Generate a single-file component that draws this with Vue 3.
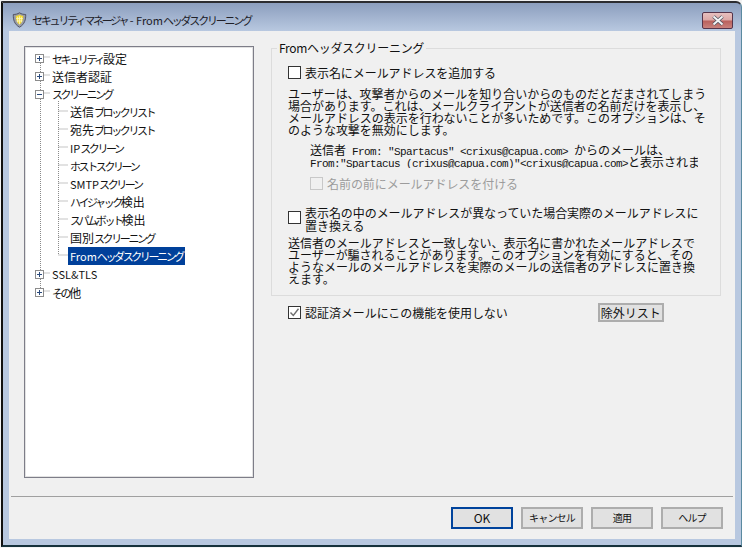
<script setup>
const kindOf = (t) => (/^[A-Za-z&]+$/.test(t) ? 'latin' : /^[\u4e00-\u9fff]+$/.test(t) ? 'kanji' : 'kana')
const split = (s) => s.split(/([A-Za-z&]+|[\u4e00-\u9fff]+)/).filter(Boolean).map((text) => ({ text, kind: kindOf(text) }))
const roots = [
  { label: 'セキュリティ設定', mark: '+' },
  { label: '送信者認証', mark: '+' },
  { label: 'スクリーニング', mark: '-' },
].map((r) => ({ ...r, parts: split(r.label) }))
const children = ['送信ブロックリスト', '宛先ブロックリスト', 'IPスクリーン', 'ホストスクリーン', 'SMTPスクリーン', 'ハイジャック検出', 'スパムボット検出', '国別スクリーニング'].map((label) => ({ label, parts: split(label) }))
const selected = split('Fromヘッダスクリーニング')
const tail = ['SSL&TLS', 'その他'].map((label) => ({ label, parts: split(label) }))
const buttons = ['キャンセル', '適用', 'ヘルプ']
</script>

<template>
  <div class="window">
    <div class="titlebar">
      <svg class="shield" width="15" height="16" viewBox="0 0 16 17">
        <path d="M8 .8 C6 2.2 3.6 2.6 1.4 2.6 C1.2 8 2.4 13 8 16.2 C13.6 13 14.8 8 14.6 2.6 C12.4 2.6 10 2.2 8 .8Z" fill="#9a9ca6" stroke="#4c4f60" />
        <path d="M8 3 C6.8 3.8 5.4 4.2 4 4.2 C4 8 5 11.4 8 13.6 C11 11.4 12 8 12 4.2 C10.6 4.2 9.2 3.8 8 3Z" fill="#f2d92e" />
        <path d="M6 5 V11 M8 4.5 V13 M10 5 V11 M4.5 7 H11.5 M5 9.5 H11" stroke="#fff8c0" stroke-width=".9" />
      </svg>
      <span class="title">セキュリティマネージャ<span class="latin"> - From</span>ヘッダスクリーニング</span>
      <div class="close">
        <svg width="14" height="11" viewBox="0 0 14 11">
          <path d="M2.5 1.5 L11.5 9.5 M11.5 1.5 L2.5 9.5" stroke="#4f5560" stroke-width="3.6" />
          <path d="M2.5 1.5 L11.5 9.5 M11.5 1.5 L2.5 9.5" stroke="#f4f4f6" stroke-width="2" />
        </svg>
      </div>
    </div>

    <div class="frame">
      <div class="client">
        <div class="main">
          <div class="tree">
            <svg class="lines" width="60" height="260" viewBox="0 0 60 260">
              <path d="M15.5 10 V243 M15.5 8 H25 M15.5 26 H25 M15.5 44 H25 M15.5 224 H25 M15.5 242 H25 M33.5 52 V206 M33.5 62 H43 M33.5 80 H43 M33.5 98 H43 M33.5 116 H43 M33.5 134 H43 M33.5 152 H43 M33.5 170 H43 M33.5 188 H43 M33.5 206 H43" stroke="#8a8a8a" stroke-dasharray="1 1" fill="none" />
            </svg>
            <div v-for="r in roots" :key="r.label" class="row root">
              <span class="exp">
                <svg width="9" height="9" viewBox="0 0 9 9">
                  <path :d="r.mark === '+' ? 'M2 4.5 H7 M4.5 2 V7' : 'M2 4.5 H7'" stroke="#2a4a7c" fill="none" />
                </svg>
              </span>
              <span><span v-for="p in r.parts" :key="p.text" :class="p.kind">{{ p.text }}</span></span>
            </div>
            <div v-for="c in children" :key="c.label" class="row child">
              <span class="item"><span v-for="p in c.parts" :key="p.text" :class="p.kind">{{ p.text }}</span></span>
            </div>
            <div class="row child">
              <span class="item selected"><span v-for="p in selected" :key="p.text" :class="p.kind">{{ p.text }}</span></span>
            </div>
            <div v-for="t in tail" :key="t.label" class="row root">
              <span class="exp">
                <svg width="9" height="9" viewBox="0 0 9 9"><path d="M2 4.5 H7 M4.5 2 V7" stroke="#2a4a7c" fill="none" /></svg>
              </span>
              <span><span v-for="p in t.parts" :key="p.text" :class="p.kind">{{ p.text }}</span></span>
            </div>
          </div>

          <div class="pane">
            <div class="group">
              <span class="legend">Fromヘッダスクリーニング</span>
              <label class="check first"><span class="box"></span><span>表示名にメールアドレスを追加する</span></label>
              <p class="para p1">ユーザーは、攻撃者からのメールを知り合いからのものだとだまされてしまう<br>場合があります。これは、メールクライアントが送信者の名前だけを表示し、<br>メールアドレスの表示を行わないことが多いためです。このオプションは、そ<br>のような攻撃を無効にします。</p>
              <div class="sample">
                <div class="mono"><span class="cj">送信者</span> From: "Spartacus" &lt;crixus@capua.com&gt; <span class="cj">からのメールは、</span></div>
                <div class="mono">From:"Spartacus (crixus@capua.com)"&lt;crixus@capua.com&gt;<span class="cj">と表示されます</span></div>
              </div>
              <label class="check disabled"><span class="box"></span><span>名前の前にメールアドレスを付ける</span></label>
              <label class="check second"><span class="box"></span><span class="wrap">表示名の中のメールアドレスが異なっていた場合実際のメールアドレスに<br>置き換える</span></label>
              <p class="para p2">送信者のメールアドレスと一致しない、表示名に書かれたメールアドレスで<br>ユーザーが騙されることがあります。このオプションを有効にすると、その<br>ようなメールのメールアドレスを実際のメールの送信者のアドレスに置き換<br>えます。</p>
            </div>
            <div class="foot">
              <label class="check"><span class="box on">
                <svg width="11" height="11" viewBox="0 0 11 11"><path d="M1.5 5.5 L4.3 8.5 L9.5 1.8" stroke="#6f6f6f" stroke-width="1.4" fill="none" /></svg>
              </span><span>認証済メールにこの機能を使用しない</span></label>
              <button class="btn exclude">除外リスト</button>
            </div>
          </div>
        </div>

        <div class="sep"></div>
        <div class="actions">
          <button class="btn action ok">OK</button>
          <button v-for="b in buttons" :key="b" class="btn action small">{{ b }}</button>
        </div>
      </div>
    </div>
  </div>
</template>

<style>
html, body { margin: 0; background: #fff; overflow: hidden; }
</style>

<style scoped>
.window {
  width: 742px;
  height: 548px;
  box-sizing: border-box;
  border-top: 1px solid #f0f0f0;
  padding: 0 0 0 1px;
  display: flex;
  flex-direction: column;
  font-family: "Noto Sans CJK JP", "Liberation Sans", sans-serif;
  font-size: 12px;
  color: #111;
  background: #f4f4f4;
}
.titlebar {
  height: 30px;
  box-sizing: border-box;
  flex: none;
  border-top: 2px solid #2c2c30;
  border-left: 2px solid #111;
  border-right: 1px solid #5b8aa0;
  border-top-right-radius: 6px;
  padding: 6px 8px 0 9px;
  display: flex;
  align-items: center;
  gap: 5px;
  background: linear-gradient(#8c9ebe, #b8c8e0);
}
.shield { flex: none; }
.title {
  flex: 1;
  font-size: 11px;
  letter-spacing: -2.2px;
  white-space: nowrap;
  color: #202028;
}
.title .latin { letter-spacing: 0; }
.close {
  width: 31px;
  height: 17px;
  box-sizing: border-box;
  border: 1px solid #55344a;
  border-radius: 2px;
  background: linear-gradient(#e6bfbf 0, #dca8a6 48%, #b9605c 52%, #c9817c 100%);
  display: flex;
  align-items: center;
  justify-content: center;
}
.frame {
  flex: 1;
  display: flex;
  border-left: 2px solid #111;
  border-right: 1px solid #5b8aa0;
  border-bottom: 2px solid #16323c;
  margin-bottom: 1px;
  background: #b8c8e0;
  padding: 0 6px 6px;
}
.client {
  flex: 1;
  display: flex;
  flex-direction: column;
  background: #f0f0f0;
}
.main {
  height: 465px;
  flex: none;
  display: flex;
  box-sizing: border-box;
  padding: 15px 0 0 15px;
}
.tree {
  width: 230px;
  height: 432px;
  flex: none;
  box-sizing: border-box;
  border: 1px solid #7d7d88;
  background: #fff;
  box-shadow: inset 0 0 0 1px #e2e2e2;
  padding: 2px 0 0 10px;
  position: relative;
  font-size: 11px;
}
.tree .kana { letter-spacing: -2.4px; }
.tree .kanji { font-size: 12px; }
.tree .latin { letter-spacing: 0; }
.lines { position: absolute; left: 0; top: 2px; pointer-events: none; }
.row { height: 18px; display: flex; align-items: center; white-space: nowrap; position: relative; }
.root { gap: 8px; }
.exp {
  width: 9px;
  height: 9px;
  box-sizing: border-box;
  border: 1px solid #8c8c8c;
  background: #fff;
  display: flex;
  align-items: center;
  justify-content: center;
  flex: none;
  position: relative;
}
.exp svg { margin: -1px; flex: none; }
.child { padding-left: 33px; }
.item { padding: 0 2px; line-height: 18px; height: 18px; }
.selected { background: #00409a; color: #fff; }
.pane {
  margin-left: 17px;
  width: 450px;
  flex: none;
  margin-top: 2px;
}
.group {
  height: 248px;
  box-sizing: border-box;
  border: 1px solid #dcdcdc;
  position: relative;
  padding: 17px 0 0 16px;
}
.legend {
  position: absolute;
  left: 5px;
  top: -8px;
  background: #f0f0f0;
  padding: 0 2px;
  line-height: 14px;
  letter-spacing: -.3px;
  white-space: nowrap;
}
.check { display: flex; align-items: center; gap: 4px; white-space: nowrap; line-height: 13px; letter-spacing: -.06px; }
.box {
  width: 13px;
  height: 13px;
  box-sizing: border-box;
  border: 1px solid #333;
  background: #fff;
  flex: none;
  display: flex;
  align-items: center;
  justify-content: center;
}
.para { margin: 0; line-height: 12px; white-space: nowrap; letter-spacing: -.03px; }
.p1 { margin-top: 9px; }
.sample { margin: 8px 0 0 22px; width: 388px; overflow: hidden; }
.mono { font-family: "Liberation Mono", monospace; font-size: 11px; letter-spacing: -.6px; line-height: 12px; height: 12px; white-space: nowrap; }
.cj { font-family: "Noto Sans CJK JP", sans-serif; font-size: 12px; letter-spacing: 0; }
.disabled { margin: 9px 0 0 22px; color: #9c9c9c; }
.disabled .box { border-color: #c8c8c8; background: #f0f0f0; }
.second { margin-top: 21px; align-items: flex-start; }
.wrap { margin-top: -5px; line-height: 13px; }
.p2 { margin-top: 5px; }
.foot {
  display: flex;
  align-items: center;
  padding-left: 17px;
  height: 19px;
  margin-top: 7px;
}
.btn {
  box-sizing: border-box;
  border: 2px solid #adadad;
  background: #e1e1e1;
  font-family: inherit;
  color: #111;
  padding: 0;
  font-size: 12px;
}
.exclude { margin-left: 90px; width: 66px; height: 19px; line-height: 13px; }
.sep { height: 1px; background: #a0a0a0; margin: 0 2px; flex: none; }
.actions {
  display: flex;
  justify-content: flex-end;
  gap: 8px;
  padding: 10px 12px 0 0;
}
.action { width: 62px; height: 22px; line-height: 16px; }
.ok { border-color: #00439c; }
.small { font-size: 10px; letter-spacing: -.8px; }
</style>
